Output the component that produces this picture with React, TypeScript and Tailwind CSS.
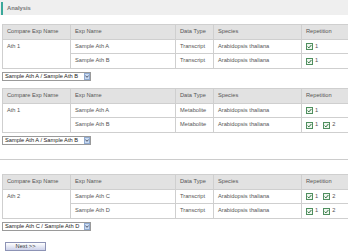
import React from "react";

const font = { fontFamily: '"Liberation Sans", Arial, sans-serif' };

function Check() {
  return (
    <svg width="7" height="7" viewBox="0 0 7 7" className="inline-block align-middle">
      <rect x="0.5" y="0.5" width="6" height="6" fill="#eef6ee" stroke="#4f8f5f" strokeWidth="1" />
      <path d="M1.6 3.6 L2.9 4.9 L5.4 2" fill="none" stroke="#2f6f3f" strokeWidth="1" />
    </svg>
  );
}

function Reps({ n }: { n: number }) {
  const items = [];
  for (let i = 1; i <= n; i++) {
    items.push(
      <span key={i} className="inline-flex items-center gap-[2px] mr-[5px]">
        <Check />
        <span>{i}</span>
      </span>
    );
  }
  return <div className="flex items-center">{items}</div>;
}

type Row = { exp: string; type: string; reps: number };

function Block({ name, rows }: { name: string; rows: Row[] }) {
  const td = "border border-[#cfcfcf] px-[4px] py-0 align-middle leading-none";
  return (
    <table className="w-[346px] border-collapse table-fixed text-[5.7px] text-[#555]">
      <colgroup>
        <col className="w-[68px]" />
        <col className="w-[105px]" />
        <col className="w-[38px]" />
        <col className="w-[88px]" />
        <col className="w-[47px]" />
      </colgroup>
      <thead>
        <tr className="h-[15px] bg-[#e2e2e2]">
          <th className={td + " font-normal text-left"}>Compare Exp Name</th>
          <th className={td + " font-normal text-left"}>Exp Name</th>
          <th className={td + " font-normal text-left"}>Data Type</th>
          <th className={td + " font-normal text-left"}>Species</th>
          <th className={td + " font-normal text-left"}>Repetition</th>
        </tr>
      </thead>
      <tbody>
        {rows.map((r, i) => (
          <tr key={i} className={(i === 0 ? "h-[14px]" : "h-[15px]") + " bg-white"}>
            {i === 0 && (
              <td rowSpan={rows.length} className={td + " align-top pt-[4px]"}>
                {name}
              </td>
            )}
            <td className={td}>{r.exp}</td>
            <td className={td}>{r.type}</td>
            <td className={td}>Arabidopsis thaliana</td>
            <td className={td}>
              <Reps n={r.reps} />
            </td>
          </tr>
        ))}
      </tbody>
    </table>
  );
}

function FakeSelect({ label }: { label: string }) {
  return (
    <div className="flex items-center w-[89px] h-[9px] border border-[#9a9a9a] bg-white text-[5.7px] text-[#222]">
      <span className="flex-1 pl-[2px] leading-none whitespace-nowrap overflow-hidden">{label}</span>
      <span className="w-[6px] h-[7px] flex items-center justify-center bg-[#c9dbf2] border border-[#8fa9cf]">
        <svg width="4" height="3" viewBox="0 0 4 3">
          <path d="M0.3 0.5 L2 2.3 L3.7 0.5" fill="none" stroke="#334" strokeWidth="0.8" />
        </svg>
      </span>
    </div>
  );
}

export default function App() {
  return (
    <div className="w-[348px] h-[252px] bg-white overflow-hidden" style={font}>
      <div className="h-[15px] bg-[#efefef] flex items-stretch pt-[2px]">
        <div className="w-[2px] ml-[1px] bg-[#3aa89a]" />
        <div className="pl-[4px] flex items-center text-[5.8px] font-bold text-[#777]">Analysis</div>
      </div>
      <div className="pl-[2px]">
        <div className="mt-[9px]">
          <Block
            name="Ath 1"
            rows={[
              { exp: "Sample Ath A", type: "Transcript", reps: 1 },
              { exp: "Sample Ath B", type: "Transcript", reps: 1 },
            ]}
          />
        </div>
        <div className="mt-[3px]">
          <FakeSelect label="Sample Ath A / Sample Ath B" />
        </div>
        <div className="mt-[7px]">
          <Block
            name="Ath 1"
            rows={[
              { exp: "Sample Ath A", type: "Metabolite", reps: 1 },
              { exp: "Sample Ath B", type: "Metabolite", reps: 2 },
            ]}
          />
        </div>
        <div className="mt-[3px]">
          <FakeSelect label="Sample Ath A / Sample Ath B" />
        </div>
      </div>
      <div className="mt-[14px] h-px bg-[#cccccc]" />
      <div className="pl-[2px]">
        <div className="mt-[14px]">
          <Block
            name="Ath 2"
            rows={[
              { exp: "Sample Ath C", type: "Transcript", reps: 2 },
              { exp: "Sample Ath D", type: "Transcript", reps: 2 },
            ]}
          />
        </div>
        <div className="mt-[3px]">
          <FakeSelect label="Sample Ath C / Sample Ath D" />
        </div>
        <div className="mt-[11px] ml-[3px]">
          <div className="w-[41px] h-[9px] border border-[#8d93b5] bg-gradient-to-b from-[#ffffff] to-[#cdd2ea] flex items-center justify-center text-[5.7px] text-[#333]">
            Next &gt;&gt;
          </div>
        </div>
      </div>
    </div>
  );
}
